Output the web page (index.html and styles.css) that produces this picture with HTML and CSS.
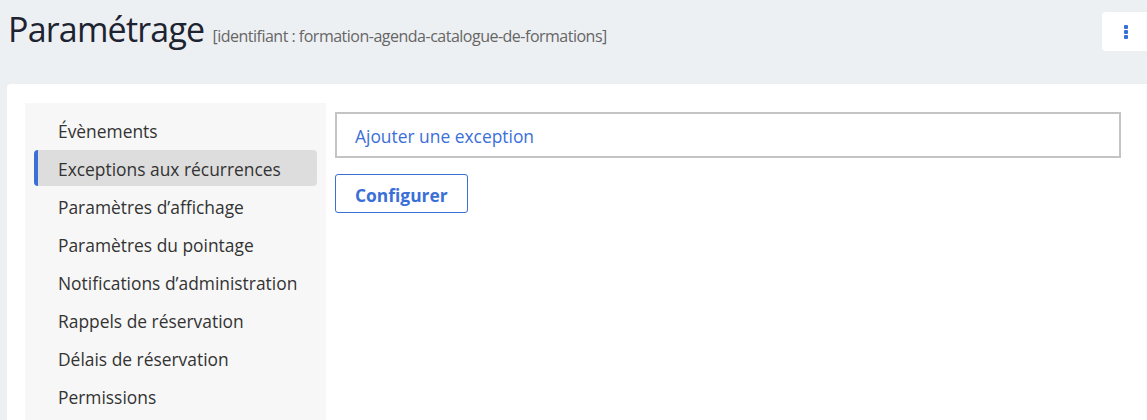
FILE: index.html
```html
<!DOCTYPE html>
<html lang="fr">
<head>
    <meta charset="UTF-8">
    <title>Paramétrage</title>
    <link rel="stylesheet" href="styles.css">
</head>
<body>
    <div class="page-header">
        <h1>Paramétrage <span class="identifier">[identifiant : formation-agenda-catalogue-de-formations]</span></h1>
        <button class="menu-button" aria-label="Actions">
            <svg width="4" height="14" viewBox="0 0 4 14"><rect x="0" y="0" width="4" height="4" rx="1"/><rect x="0" y="5" width="4" height="4" rx="1"/><rect x="0" y="10" width="4" height="4" rx="1"/></svg>
        </button>
    </div>

    <div class="panel">
        <nav class="sidebar">
            <a class="nav-item">Évènements</a>
            <a class="nav-item active">Exceptions aux récurrences</a>
            <a class="nav-item">Paramètres d’affichage</a>
            <a class="nav-item">Paramètres du pointage</a>
            <a class="nav-item">Notifications d’administration</a>
            <a class="nav-item">Rappels de réservation</a>
            <a class="nav-item">Délais de réservation</a>
            <a class="nav-item">Permissions</a>
        </nav>
        <div class="content">
            <div class="add-link">Ajouter une exception</div>
            <div><button class="configure">Configurer</button></div>
        </div>
    </div>
</body>
</html>
```

FILE: styles.css
```css
body {
    margin: 0;
    background-color: #edf0f3;
    font-family: "Open Sans", sans-serif;
    color: #333;
    overflow: hidden;
}

.page-header {
    display: flex;
    justify-content: space-between;
    align-items: flex-start;
    height: 84px;
    padding-left: 8px;
}

h1 {
    margin: 0;
    padding-top: 7px;
    font-weight: 400;
    font-size: 34px;
    line-height: 44px;
    letter-spacing: -0.8px;
    color: #1d2330;
}

.identifier {
    font-size: 16px;
    letter-spacing: -0.5px;
    color: #666;
}

.menu-button {
    margin-top: 12px;
    width: 45px;
    height: 39px;
    background: #fff;
    border: none;
    border-radius: 4px 0 0 4px;
    padding: 0 0 0 2px;
    display: flex;
    align-items: center;
    justify-content: center;
    fill: #3a6fd8;
}

.panel {
    margin-left: 7px;
    background: #fff;
    border-radius: 4px 0 0 0;
    padding: 19px 0 0 18px;
    display: flex;
    gap: 9px;
    min-height: 320px;
}

.sidebar {
    width: 301px;
    flex-shrink: 0;
    background: #f7f7f7;
    padding: 9px 0 0 0;
    display: flex;
    flex-direction: column;
    gap: 2px;
}

.nav-item {
    display: block;
    margin: 0 9px;
    height: 36px;
    line-height: 38px;
    padding-left: 24px;
    font-size: 17.4px;
    color: #333;
    border-radius: 4px;
}

.nav-item.active {
    background: #dddddd;
    border-left: 4px solid #3a6fd8;
    padding-left: 20px;
}

.content {
    flex: 1;
    padding-top: 9px;
    padding-right: 26px;
    display: flex;
    flex-direction: column;
    gap: 16px;
}

.add-link {
    border: 2px solid #c4c4c4;
    height: 42px;
    line-height: 44px;
    padding-left: 18px;
    font-size: 17.4px;
    color: #3a6fd8;
}

.configure {
    font-family: "Open Sans", sans-serif;
    font-size: 17.4px;
    font-weight: 700;
    color: #3a6fd8;
    background: #fff;
    border: 1px solid #3a6fd8;
    border-radius: 3px;
    height: 39px;
    padding: 2px 19px 0;
}
```
